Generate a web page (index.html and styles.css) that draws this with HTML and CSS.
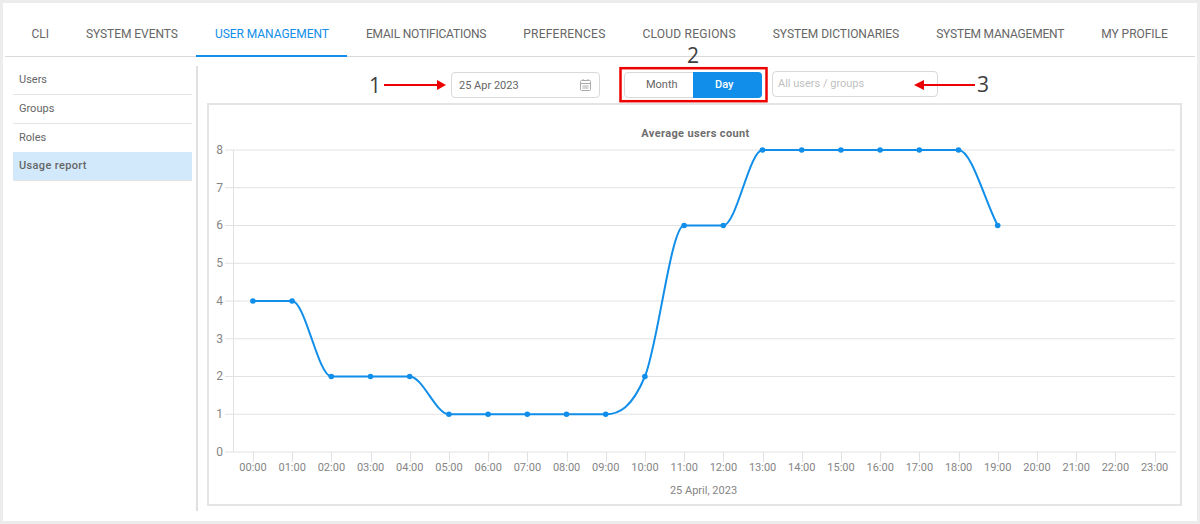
FILE: index.html
```html
<!DOCTYPE html>
<html lang="en">

<head>
    <meta charset="UTF-8">
    <title>User management - Usage report</title>
    <link rel="stylesheet" href="styles.css">
</head>

<body>
    <div class="page">
        <nav class="tabs">
            <a class="tab">CLI</a>
            <a class="tab">SYSTEM EVENTS</a>
            <a class="tab active">USER MANAGEMENT</a>
            <a class="tab tight">EMAIL NOTIFICATIONS</a>
            <a class="tab loose">PREFERENCES</a>
            <a class="tab loose">CLOUD REGIONS</a>
            <a class="tab">SYSTEM DICTIONARIES</a>
            <a class="tab tight">SYSTEM MANAGEMENT</a>
            <a class="tab">MY PROFILE</a>
        </nav>

        <div class="main">
            <ul class="side">
                <li>Users</li>
                <li>Groups</li>
                <li class="plain">Roles</li>
                <li class="selected">Usage report</li>
            </ul>

            <div class="content">
                <div class="toolbar">
                    <div class="date">
                        <span>25 Apr 2023</span>
                        <svg class="cal" width="11" height="12" viewBox="0 0 11 12">
                            <rect x="0.5" y="1.5" width="10" height="10" rx="1" />
                            <path d="M0.5 4.5H10.5M3 0V2M8 0V2M2.5 7H8.5M2.5 9H8.5" />
                        </svg>
                    </div>
                    <div class="segment">
                        <span class="seg">Month</span>
                        <span class="seg on">Day</span>
                    </div>
                    <div class="select">All users / groups</div>
                </div>

                <div class="card">
                    <svg class="chart" width="971" height="399" viewBox="208 105 971 399">
                        <text class="title" x="694.5" y="137">Average users count</text>

                        <g class="grid">
                            <path d="M224 150H1174M224 187.75H1174M224 225.5H1174M224 263.25H1174M224 301H1174M224 338.75H1174M224 376.5H1174M224 414.25H1174M224 452H1175" />
                            <path d="M232.5 150V452" />
                            <path d="M252.5 452V462M291.5 452V462M330.5 452V462M370.5 452V462M409.5 452V462M448.5 452V462M487.5 452V462M526.5 452V462M566.5 452V462M605.5 452V462M644.5 452V462M683.5 452V462M722.5 452V462M762.5 452V462M801.5 452V462M840.5 452V462M879.5 452V462M918.5 452V462M958.5 452V462M997.5 452V462M1036.5 452V462M1075.5 452V462M1114.5 452V462M1154.5 452V462" />
                        </g>

                        <g class="ylabels">
                            <text x="222" y="154">8</text>
                            <text x="222" y="192">7</text>
                            <text x="222" y="229">6</text>
                            <text x="222" y="267">5</text>
                            <text x="222" y="305">4</text>
                            <text x="222" y="343">3</text>
                            <text x="222" y="380">2</text>
                            <text x="222" y="418">1</text>
                            <text x="222" y="456">0</text>
                        </g>

                        <g class="xlabels">
                            <text x="252" y="471">00:00</text>
                            <text x="291.2" y="471">01:00</text>
                            <text x="330.4" y="471">02:00</text>
                            <text x="369.6" y="471">03:00</text>
                            <text x="408.8" y="471">04:00</text>
                            <text x="448" y="471">05:00</text>
                            <text x="487.2" y="471">06:00</text>
                            <text x="526.4" y="471">07:00</text>
                            <text x="565.6" y="471">08:00</text>
                            <text x="604.8" y="471">09:00</text>
                            <text x="644" y="471">10:00</text>
                            <text x="683.2" y="471">11:00</text>
                            <text x="722.4" y="471">12:00</text>
                            <text x="761.6" y="471">13:00</text>
                            <text x="800.8" y="471">14:00</text>
                            <text x="840" y="471">15:00</text>
                            <text x="879.2" y="471">16:00</text>
                            <text x="918.4" y="471">17:00</text>
                            <text x="957.6" y="471">18:00</text>
                            <text x="996.8" y="471">19:00</text>
                            <text x="1036" y="471">20:00</text>
                            <text x="1075.2" y="471">21:00</text>
                            <text x="1114.4" y="471">22:00</text>
                            <text x="1153.6" y="471">23:00</text>
                            <text x="702.5" y="494">25 April, 2023</text>
                        </g>

                        <g transform="translate(-0.5 0)">
                            <path class="line" d="M252.4 301L291.6 301C304.7 301 317.7 376.5 330.8 376.5L409.2 376.5C422.3 376.5 435.3 414.25 448.4 414.25L605.2 414.25C618.3 414.25 631.3 407.96 644.4 376.5C657.5 345.04 670.5 225.5 683.6 225.5L722.8 225.5C735.9 225.5 748.9 150 762 150L958 150C971.1 150 984.1 200.33 997.2 225.5" />

                            <g class="dots">
                                <circle cx="252.4" cy="301" r="2.8" />
                                <circle cx="291.6" cy="301" r="2.8" />
                                <circle cx="330.8" cy="376.5" r="2.8" />
                                <circle cx="370" cy="376.5" r="2.8" />
                                <circle cx="409.2" cy="376.5" r="2.8" />
                                <circle cx="448.4" cy="414.25" r="2.8" />
                                <circle cx="487.6" cy="414.25" r="2.8" />
                                <circle cx="526.8" cy="414.25" r="2.8" />
                                <circle cx="566" cy="414.25" r="2.8" />
                                <circle cx="605.2" cy="414.25" r="2.8" />
                                <circle cx="644.4" cy="376.5" r="2.8" />
                                <circle cx="683.6" cy="225.5" r="2.8" />
                                <circle cx="722.8" cy="225.5" r="2.8" />
                                <circle cx="762" cy="150" r="2.8" />
                                <circle cx="801.2" cy="150" r="2.8" />
                                <circle cx="840.4" cy="150" r="2.8" />
                                <circle cx="879.6" cy="150" r="2.8" />
                                <circle cx="918.8" cy="150" r="2.8" />
                                <circle cx="958" cy="150" r="2.8" />
                                <circle cx="997.2" cy="225.5" r="2.8" />
                            </g>
                        </g>
                    </svg>
                </div>
            </div>
        </div>

        <!-- red callouts drawn over the screenshot -->
        <svg class="marks" width="1200" height="524" viewBox="0 0 1200 524">
            <rect class="box" x="620.5" y="68.2" width="146" height="33" />
            <path class="arrow" d="M384 85H438" />
            <path class="head" d="M437 80L446 85L437 90Z" />
            <path class="arrow" d="M924 85H975" />
            <path class="head" d="M924 80L914 85L924 90Z" />
            <text class="num" x="375" y="92.5">1</text>
            <text class="num" x="693" y="63">2</text>
            <text class="num" x="983" y="91.5">3</text>
        </svg>
    </div>
</body>

</html>
```

FILE: styles.css
```css
* {
    box-sizing: border-box;
}

body {
    margin: 0;
    background: #ececec;
    font-family: Roboto, "Liberation Sans", sans-serif;
    font-size: 11px;
    color: #666;
}

.page {
    height: 518px;
    margin: 3px;
    padding: 0 2px;
    background: #fff;
}

/* top tabs */
.tabs {
    display: flex;
    height: 54px;
    padding-left: 8px;
    border-bottom: 1px solid #d9d9d9;
}

.tab {
    height: 54px;
    padding: 0 18.5px;
    font-size: 12px;
    letter-spacing: -0.05px;
    line-height: 62px;
    white-space: nowrap;
}

.tab.tight {
    letter-spacing: -0.2px;
}

.tab.loose {
    letter-spacing: 0.22px;
}

.tab.active {
    color: #108ee9;
    border-bottom: 2px solid #108ee9;
}

.main {
    display: flex;
}

/* left menu */
.side {
    width: 179px;
    margin: 9px 0 0 8px;
    padding: 0;
    list-style: none;
}

.side li {
    height: 29px;
    padding-left: 6px;
    line-height: 28.5px;
    border-bottom: 1px solid #e4e4e4;
}

.side li.plain {
    height: 27.5px;
    line-height: 27.5px;
    border-bottom: 0;
}

.side li.selected {
    height: 29.5px;
    background: #d2e9fb;
    font-weight: 500;
    letter-spacing: 0.35px;
}

.content {
    width: 991px;
    height: 445px;
    margin: 9px 0 0 4px;
    border-left: 2px solid #e0e0e0;
}

.toolbar {
    display: flex;
    align-items: flex-start;
    height: 37px;
    padding: 6px 0 0 253px;
}

.date {
    display: flex;
    align-items: center;
    justify-content: space-between;
    width: 149px;
    height: 26px;
    padding: 0 8px 0 7px;
    border: 1px solid #d9d9d9;
    border-radius: 4px;
}

.cal {
    fill: none;
    stroke: #aaa;
}

.segment {
    display: flex;
    width: 138px;
    height: 26px;
    margin-left: 24px;
    border: 1px solid #d9d9d9;
    border-radius: 4px;
}

.seg {
    flex: 1;
    padding-left: 5px;
    line-height: 23px;
    text-align: center;
}

.seg.on {
    margin: -1px;
    padding: 0 6px 0 0;
    background: #108ee9;
    border-radius: 0 4px 4px 0;
    color: #fff;
    font-weight: 500;
    line-height: 25px;
}

.select {
    width: 166px;
    height: 26px;
    margin: -1px 0 0 10px;
    padding-left: 5px;
    border: 1px solid #d9d9d9;
    border-radius: 4px;
    color: #bfbfbf;
    line-height: 24px;
}

/* chart */
.card {
    width: 975px;
    height: 403px;
    margin-left: 9px;
    border: 2px solid #e4e4e4;
}

.chart {
    display: block;
}

.chart text {
    font-family: Roboto, "Liberation Sans", sans-serif;
    font-size: 11px;
    fill: #858585;
}

.chart .title {
    fill: #6e6e6e;
    font-weight: 700;
    letter-spacing: 0.37px;
    text-anchor: middle;
}

.grid path {
    fill: none;
    stroke: #e2e2e2;
    stroke-width: 1;
}

.ylabels text {
    font-size: 12px;
    text-anchor: end;
}

.xlabels text {
    text-anchor: middle;
}

.line {
    fill: none;
    stroke: #108ee9;
    stroke-width: 2;
}

.dots circle {
    fill: #108ee9;
}

/* callouts */
.marks {
    position: absolute;
    top: 0;
    left: 0;
    pointer-events: none;
}

.box {
    fill: none;
    stroke: #ed0000;
    stroke-width: 2.5;
}

.arrow {
    fill: none;
    stroke: #ed0000;
    stroke-width: 2;
}

.head {
    fill: #ed0000;
}

.num {
    font-family: "Open Sans", sans-serif;
    font-size: 21px;
    fill: #404040;
    text-anchor: middle;
}
```
